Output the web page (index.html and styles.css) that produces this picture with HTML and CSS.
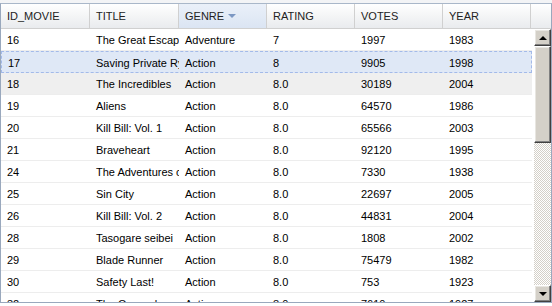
FILE: index.html
```html
<!DOCTYPE html>
<html>
<head>
<meta charset="utf-8">
<link rel="stylesheet" href="styles.css">
</head>
<body>
<div class="top-strip"></div>
<div class="grid">
  <div class="header">
    <div class="hcell c1">ID_MOVIE</div>
    <div class="hcell c2">TITLE</div>
    <div class="hcell c3 sorted">GENRE <span class="sort-arrow"></span></div>
    <div class="hcell c4">RATING</div>
    <div class="hcell c5">VOTES</div>
    <div class="hcell c6">YEAR</div>
    <div class="hcell filler"></div>
  </div>
  <div class="body">
    <div class="rows">
      <div class="row"><div class="cell c1">16</div><div class="cell c2">The Great Escape</div><div class="cell c3">Adventure</div><div class="cell c4">7</div><div class="cell c5">1997</div><div class="cell c6">1983</div></div>
      <div class="row selected"><div class="cell c1">17</div><div class="cell c2">Saving Private Ryan</div><div class="cell c3">Action</div><div class="cell c4">8</div><div class="cell c5">9905</div><div class="cell c6">1998</div></div>
      <div class="row hover"><div class="cell c1">18</div><div class="cell c2">The Incredibles</div><div class="cell c3">Action</div><div class="cell c4">8.0</div><div class="cell c5">30189</div><div class="cell c6">2004</div></div>
      <div class="row"><div class="cell c1">19</div><div class="cell c2">Aliens</div><div class="cell c3">Action</div><div class="cell c4">8.0</div><div class="cell c5">64570</div><div class="cell c6">1986</div></div>
      <div class="row"><div class="cell c1">20</div><div class="cell c2">Kill Bill: Vol. 1</div><div class="cell c3">Action</div><div class="cell c4">8.0</div><div class="cell c5">65566</div><div class="cell c6">2003</div></div>
      <div class="row"><div class="cell c1">21</div><div class="cell c2">Braveheart</div><div class="cell c3">Action</div><div class="cell c4">8.0</div><div class="cell c5">92120</div><div class="cell c6">1995</div></div>
      <div class="row"><div class="cell c1">24</div><div class="cell c2">The Adventures of Robin Hood</div><div class="cell c3">Action</div><div class="cell c4">8.0</div><div class="cell c5">7330</div><div class="cell c6">1938</div></div>
      <div class="row"><div class="cell c1">25</div><div class="cell c2">Sin City</div><div class="cell c3">Action</div><div class="cell c4">8.0</div><div class="cell c5">22697</div><div class="cell c6">2005</div></div>
      <div class="row"><div class="cell c1">26</div><div class="cell c2">Kill Bill: Vol. 2</div><div class="cell c3">Action</div><div class="cell c4">8.0</div><div class="cell c5">44831</div><div class="cell c6">2004</div></div>
      <div class="row"><div class="cell c1">28</div><div class="cell c2">Tasogare seibei</div><div class="cell c3">Action</div><div class="cell c4">8.0</div><div class="cell c5">1808</div><div class="cell c6">2002</div></div>
      <div class="row"><div class="cell c1">29</div><div class="cell c2">Blade Runner</div><div class="cell c3">Action</div><div class="cell c4">8.0</div><div class="cell c5">75479</div><div class="cell c6">1982</div></div>
      <div class="row"><div class="cell c1">30</div><div class="cell c2">Safety Last!</div><div class="cell c3">Action</div><div class="cell c4">8.0</div><div class="cell c5">753</div><div class="cell c6">1923</div></div>
      <div class="row"><div class="cell c1">32</div><div class="cell c2">The General</div><div class="cell c3">Action</div><div class="cell c4">8.0</div><div class="cell c5">7610</div><div class="cell c6">1927</div></div>
    </div>
    <div class="scrollbar">
      <div class="sb-btn"><span class="arr-up"></span></div>
      <div class="sb-thumb"></div>
      <div class="sb-track"></div>
      <div class="sb-btn"><span class="arr-down"></span></div>
    </div>
  </div>
</div>
</body>
</html>
```

FILE: styles.css
```css
html, body {
  margin: 0;
  padding: 0;
  background: #ffffff;
}
body {
  width: 552px;
  height: 306px;
  overflow: hidden;
  font-family: "Liberation Sans", Arial, sans-serif;
  font-size: 11px;
  color: #000;
}
.top-strip {
  height: 3px;
  background: #f3f4f6;
}
.grid {
  width: 552px;
  height: 300px;
  box-sizing: border-box;
  border: 1px solid #99a8bd;
  border-top-color: #a9b7c9;
  display: flex;
  flex-direction: column;
  overflow: hidden;
}
.header {
  display: flex;
  height: 24px;
  flex: none;
  background: linear-gradient(#ffffff, #f4f5f6 50%, #e9ebee);
  border-bottom: 1px solid #d0d0d0;
}
.hcell {
  box-sizing: border-box;
  border-right: 1px solid #d0d0d0;
  padding-left: 6px;
  display: flex;
  align-items: center;
  white-space: nowrap;
  overflow: hidden;
  color: #222;
}
.hcell.sorted {
  background: linear-gradient(#eaf0f9, #dbe5f3);
}
.sort-arrow {
  display: inline-block;
  width: 0;
  height: 0;
  margin-left: 4px;
  border-left: 4px solid transparent;
  border-right: 4px solid transparent;
  border-top: 4px solid #7c98c3;
}
.hcell.filler {
  flex: 1;
  border-right: none;
}
.c1 { width: 89px; flex: none; }
.c2 { width: 89px; flex: none; }
.c3 { width: 88px; flex: none; }
.c4 { width: 88px; flex: none; }
.c5 { width: 88px; flex: none; }
.c6 { width: 88px; flex: none; }
.body {
  flex: 1;
  display: flex;
  overflow: hidden;
}
.rows {
  width: 531px;
  flex: none;
  overflow: hidden;
}
.row {
  display: flex;
  height: 22px;
  box-sizing: border-box;
  border-bottom: 1px solid #ededed;
  align-items: center;
}
.row.selected {
  background: #dfe8f6;
  border: 1px dashed #a3bae9;
}
.row.selected .c1 { width: 88px; }
.row.hover {
  background: #efefef;
}
.cell {
  box-sizing: border-box;
  padding-left: 6px;
  white-space: nowrap;
  overflow: hidden;
  padding-top: 1px;
}
.row .c6 { width: 88px; }
.scrollbar {
  width: 17px;
  margin-left: 2px;
  flex: none;
  display: flex;
  flex-direction: column;
  background-color: #ffffff;
}
.sb-btn, .sb-thumb {
  box-sizing: border-box;
  background: #d4d0c8;
  border-top: 1px solid #ffffff;
  border-left: 1px solid #ffffff;
  border-right: 1px solid #404040;
  border-bottom: 1px solid #404040;
  box-shadow: inset -1px -1px 0 #808080, inset 1px 1px 0 #e8e6e1;
}
.sb-btn {
  height: 17px;
  flex: none;
  display: flex;
  align-items: center;
  justify-content: center;
}
.sb-thumb {
  height: 97px;
  flex: none;
}
.sb-track {
  flex: 1;
  background-color: #ffffff;
  background-image: conic-gradient(#d4d0c8 25%, #ffffff 0 50%, #d4d0c8 0 75%, #ffffff 0);
  background-size: 2px 2px;
}
.arr-up, .arr-down {
  width: 0;
  height: 0;
  border-left: 4px solid transparent;
  border-right: 4px solid transparent;
}
.arr-up { border-bottom: 4px solid #000; }
.arr-down { border-top: 4px solid #000; }
```
